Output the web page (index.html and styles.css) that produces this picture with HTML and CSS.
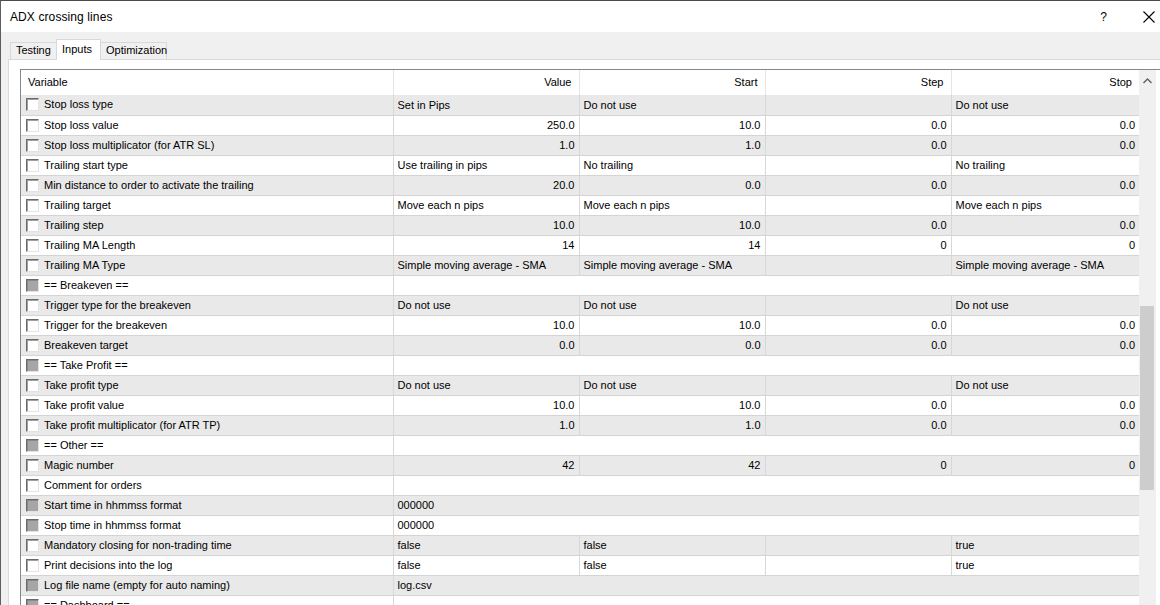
FILE: index.html
```html
<!DOCTYPE html>
<html>
<head>
<meta charset="utf-8">
<link rel="stylesheet" href="styles.css">
</head>
<body>
<div class="window">
  <div class="titlebar">
    <span class="title">ADX crossing lines</span>
    <span class="tbtns">
      <span class="help">?</span>
      <svg class="close" width="12" height="12" viewBox="0 0 12 12"><path d="M0.5 0.5 L11.5 11.5 M11.5 0.5 L0.5 11.5" stroke="#000" stroke-width="1.1" fill="none"/></svg>
    </span>
  </div>
  <div class="client">
    <div class="tabs">
      <div class="tab t1">Testing</div>
      <div class="tab sel">Inputs</div>
      <div class="tab t3">Optimization</div>
    </div>
    <div class="panel">
      <div class="listbox">
        <div class="gridwrap">
          <table class="grid">
            <colgroup><col class="c1"><col class="c2"><col class="c3"><col class="c4"><col class="c5"></colgroup>
            <thead>
              <tr><th class="l">Variable</th><th>Value</th><th>Start</th><th>Step</th><th class="last">Stop</th></tr>
            </thead>
            <tbody>
              <tr class="g"><td><span class="cb"></span>Stop loss type</td><td>Set in Pips</td><td>Do not use</td><td></td><td class="last">Do not use</td></tr>
              <tr><td><span class="cb"></span>Stop loss value</td><td class="n">250.0</td><td class="n">10.0</td><td class="n">0.0</td><td class="n last">0.0</td></tr>
              <tr class="g"><td><span class="cb"></span>Stop loss multiplicator (for ATR SL)</td><td class="n">1.0</td><td class="n">1.0</td><td class="n">0.0</td><td class="n last">0.0</td></tr>
              <tr><td><span class="cb"></span>Trailing start type</td><td>Use trailing in pips</td><td>No trailing</td><td></td><td class="last">No trailing</td></tr>
              <tr class="g"><td><span class="cb"></span>Min distance to order to activate the trailing</td><td class="n">20.0</td><td class="n">0.0</td><td class="n">0.0</td><td class="n last">0.0</td></tr>
              <tr><td><span class="cb"></span>Trailing target</td><td>Move each n pips</td><td>Move each n pips</td><td></td><td class="last">Move each n pips</td></tr>
              <tr class="g"><td><span class="cb"></span>Trailing step</td><td class="n">10.0</td><td class="n">10.0</td><td class="n">0.0</td><td class="n last">0.0</td></tr>
              <tr><td><span class="cb"></span>Trailing MA Length</td><td class="n">14</td><td class="n">14</td><td class="n">0</td><td class="n last">0</td></tr>
              <tr class="g"><td><span class="cb"></span>Trailing MA Type</td><td>Simple moving average - SMA</td><td>Simple moving average - SMA</td><td></td><td class="last">Simple moving average - SMA</td></tr>
              <tr><td><span class="cb dis"></span>== Breakeven ==</td><td colspan="4" class="last"></td></tr>
              <tr class="g"><td><span class="cb"></span>Trigger type for the breakeven</td><td>Do not use</td><td>Do not use</td><td></td><td class="last">Do not use</td></tr>
              <tr><td><span class="cb"></span>Trigger for the breakeven</td><td class="n">10.0</td><td class="n">10.0</td><td class="n">0.0</td><td class="n last">0.0</td></tr>
              <tr class="g"><td><span class="cb"></span>Breakeven target</td><td class="n">0.0</td><td class="n">0.0</td><td class="n">0.0</td><td class="n last">0.0</td></tr>
              <tr><td><span class="cb dis"></span>== Take Profit ==</td><td colspan="4" class="last"></td></tr>
              <tr class="g"><td><span class="cb"></span>Take profit type</td><td>Do not use</td><td>Do not use</td><td></td><td class="last">Do not use</td></tr>
              <tr><td><span class="cb"></span>Take profit value</td><td class="n">10.0</td><td class="n">10.0</td><td class="n">0.0</td><td class="n last">0.0</td></tr>
              <tr class="g"><td><span class="cb"></span>Take profit multiplicator (for ATR TP)</td><td class="n">1.0</td><td class="n">1.0</td><td class="n">0.0</td><td class="n last">0.0</td></tr>
              <tr><td><span class="cb dis"></span>== Other ==</td><td colspan="4" class="last"></td></tr>
              <tr class="g"><td><span class="cb"></span>Magic number</td><td class="n">42</td><td class="n">42</td><td class="n">0</td><td class="n last">0</td></tr>
              <tr><td><span class="cb"></span>Comment for orders</td><td colspan="4" class="last"></td></tr>
              <tr class="g"><td><span class="cb dis"></span>Start time in hhmmss format</td><td colspan="4" class="last">000000</td></tr>
              <tr><td><span class="cb dis"></span>Stop time in hhmmss format</td><td colspan="4" class="last">000000</td></tr>
              <tr class="g"><td><span class="cb"></span>Mandatory closing for non-trading time</td><td>false</td><td>false</td><td></td><td class="last">true</td></tr>
              <tr><td><span class="cb"></span>Print decisions into the log</td><td>false</td><td>false</td><td></td><td class="last">true</td></tr>
              <tr class="g"><td><span class="cb dis"></span>Log file name (empty for auto naming)</td><td colspan="4" class="last">log.csv</td></tr>
              <tr><td><span class="cb dis"></span>== Dashboard ==</td><td colspan="4" class="last"></td></tr>
            </tbody>
          </table>
        </div>
        <div class="vscroll">
          <div class="arrow"><svg width="9" height="6" viewBox="0 0 9 6"><path d="M0.5 5 L4.5 1 L8.5 5" stroke="#606060" stroke-width="1.4" fill="none"/></svg></div>
          <div class="track"><div class="thumb"></div></div>
        </div>
      </div>
    </div>
  </div>
</div>
</body>
</html>
```

FILE: styles.css
```css
* { box-sizing: border-box; }
html, body { margin: 0; padding: 0; }
body {
  width: 1160px;
  height: 605px;
  overflow: hidden;
  background: #f0f0f0;
  font-family: "Liberation Sans", Arial, sans-serif;
  color: #000;
}
.window {
  width: 1160px;
  height: 605px;
  overflow: hidden;
  border-top: 1px solid #4a4a4a;
  border-left: 1px solid #5e5e5e;
  display: flex;
  flex-direction: column;
}
.titlebar {
  height: 31px;
  flex: none;
  background: #fff;
  display: flex;
  align-items: center;
  justify-content: space-between;
  padding-left: 9px;
}
.title { font-size: 12px; letter-spacing: 0.1px; }
.tbtns { display: flex; align-items: center; }
.help { font-size: 12px; margin-right: 36px; }
.close { margin-right: 5px; }
.client {
  flex: 1;
  background: #f0f0f0;
  padding-left: 7px;
  display: flex;
  flex-direction: column;
  min-height: 0;
}
.tabs {
  height: 27px;
  flex: none;
  display: flex;
  align-items: flex-end;
  padding-left: 2px;
  position: relative;
  z-index: 2;
}
.tab {
  font-size: 11px;
  height: 17px;
  line-height: 15px;
  border: 1px solid #d9d9d9;
  border-bottom: none;
  background: #f0f0f0;
  padding: 0 5px;
  color: #000;
}
.t1 { width: 46px; border-right: none; }
.t3 { width: 66px; border-left: none; }
.tab.sel {
  height: 21px;
  width: 45px;
  background: #fff;
  border-color: #d9d9d9;
  line-height: 19px;
  padding-left: 5px;
  margin-bottom: -1px;
}
.panel {
  flex: 1;
  min-height: 0;
  background: #fff;
  border: 1px solid #d9d9d9;
  border-right: none;
  border-bottom: none;
  padding: 9px 0 0 11px;
}
.listbox {
  height: 100%;
  border: 1px solid #828790;
  border-right: none;
  border-bottom: none;
  display: flex;
  overflow: hidden;
}
.gridwrap { width: 1118px; flex: none; overflow: hidden; }
.grid {
  width: 1118px;
  table-layout: fixed;
  border-collapse: collapse;
  font-size: 11px;
}
.c1 { width: 372px; }
.c2, .c3, .c4 { width: 186px; }
.c5 { width: 188px; }
.grid th {
  height: 25px;
  font-weight: normal;
  text-align: right;
  padding: 0 7px 1px 4px;
  border-right: 1px solid #e5e5e5;
  background: #fff;
}
.grid th.l { text-align: left; padding-left: 7px; }
.grid th.last { border-right: none; }
.grid td {
  height: 20px;
  padding: 0 4px 0 4px;
  border-right: 1px solid #d8d8d8;
  border-bottom: 1px solid #d4d4d4;
  white-space: nowrap;
  overflow: hidden;
  background: #fff;
}
.grid tr.g td { background: #e9e9e9; }
.grid td.n { text-align: right; }
.grid td.last { border-right: none; }
.grid td:first-child { padding-left: 5px; }
.cb {
  display: inline-block;
  width: 13px;
  height: 13px;
  vertical-align: -3px;
  margin-right: 5px;
  background: #fff;
  border-top: 1px solid #6a6a6a;
  border-left: 1px solid #6a6a6a;
  border-right: 1px solid #e3e3e3;
  border-bottom: 1px solid #e3e3e3;
  box-shadow: inset 1px 1px 0 #a0a0a0;
}
.cb.dis { background: #a6a6a6; box-shadow: inset 1px 1px 0 #8a8a8a; }
.vscroll {
  width: 17px;
  flex: none;
  background: #f0f0f0;
  display: flex;
  flex-direction: column;
}
.arrow {
  height: 17px;
  display: flex;
  align-items: center;
  justify-content: center;
  margin-top: 2px;
}
.track { flex: 1; padding-top: 217px; }
.thumb {
  width: 14px;
  margin-left: 1px;
  height: 184px;
  background: #cdcdcd;
}
```
